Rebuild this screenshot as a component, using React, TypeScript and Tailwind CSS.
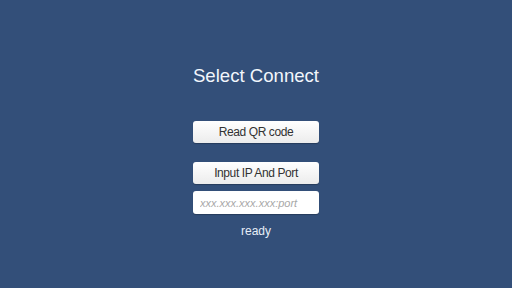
import React from "react";

export default function App() {
  return (
    <div className="w-[512px] h-[288px] bg-[#334f79] flex flex-col items-center font-['Liberation_Sans',Arial,sans-serif]">
      <h1 className="mt-[65px] h-[22px] text-[18.6px] leading-[22px] text-[#f2f6fc]">Select Connect</h1>

      <button className="mt-[34px] w-[126px] h-[22px] rounded-[3px] bg-gradient-to-b from-white to-[#ececec] text-[12px] tracking-[-0.4px] text-[#323232] shadow-[0_1px_1px_rgba(0,0,0,0.25)]">
        Read QR code
      </button>

      <button className="mt-[19px] w-[126px] h-[22px] rounded-[3px] bg-gradient-to-b from-white to-[#ececec] text-[12px] tracking-[-0.4px] text-[#323232] shadow-[0_1px_1px_rgba(0,0,0,0.25)]">
        Input IP And Port
      </button>

      <input
        className="mt-[7px] w-[126px] h-[23px] rounded-[3px] bg-white px-[7px] text-[11px] text-[#323232] italic placeholder:text-[#a8a8a8] outline-none shadow-[0_1px_1px_rgba(0,0,0,0.25)]"
        placeholder="xxx.xxx.xxx.xxx:port"
      />

      <span className="mt-[10px] text-[12px] leading-[14px] text-[#e6edf7]">ready</span>
    </div>
  );
}
